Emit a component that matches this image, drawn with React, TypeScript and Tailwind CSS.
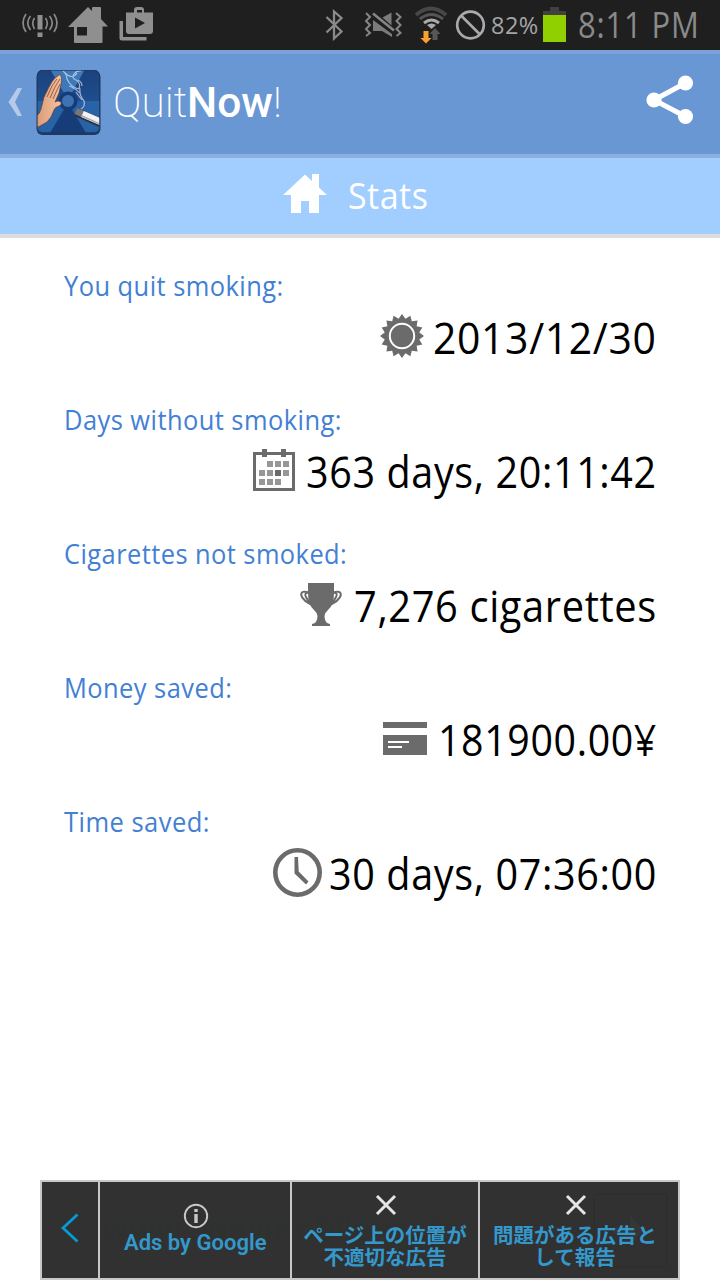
import { useLayoutEffect, useRef, useState } from "react";
import type { ReactNode } from "react";

/** Text condensed or widened horizontally so that it fills its box. */
function FitText({ children, className }: { children: ReactNode; className: string }) {
  const box = useRef<HTMLSpanElement>(null);
  const inner = useRef<HTMLSpanElement>(null);
  const [scale, setScale] = useState(1);
  useLayoutEffect(() => {
    if (box.current && inner.current && inner.current.offsetWidth) {
      setScale(box.current.clientWidth / inner.current.offsetWidth);
    }
  }, []);
  return (
    <span ref={box} className={`block shrink-0 whitespace-nowrap ${className}`}>
      <span ref={inner} className="inline-block origin-left" style={{ transform: `scaleX(${scale})` }}>
        {children}
      </span>
    </span>
  );
}

function StatusBar() {
  return (
    <div className="flex h-[50px] items-start bg-[#1f1f1f]">
      <svg className="ml-[21px] mt-[12px] shrink-0" width="38" height="26" viewBox="21 12 38 26" fill="none" stroke="#8a8a8a" strokeWidth="1.700">
        <path d="M26 14 Q20 23 26 32 M30.5 16 Q25 23 30.5 30 M34.500 18 Q31 23 34.500 29 M54 14 Q60 23 54 32 M49.500 16 Q55 23 49.500 30 M45.500 18 Q49 23 45.500 29" />
        <path d="M37.500 15h5v14.500h-5zM37.500 32.500h5v4.500h-5z" fill="#8f8f8f" stroke="none" />
      </svg>
      <svg className="ml-[9px] mt-[6px] shrink-0" width="40" height="38" viewBox="68 6 40 38">
        <path fillRule="evenodd" fill="#8f8f8f" d="M88 7l4 4V8q0-1 1-1h7q1 0 1 1v11l7 7.500h-5.500V42q0 1-1 1H75q-1 0-1-1V27h-6zM77 27v8.500h10V27z" />
      </svg>
      <svg className="ml-[11px] mt-[6px] shrink-0" width="36" height="36" viewBox="119 6 36 36">
        <path fill="#8f8f8f" fillRule="evenodd" d="M119.500 21h3.500v16H146.500v3.500H122q-2.500 0-2.500-2.500zM126 12.500h8V10q0-3 3-3h4q3 0 3 3v2.500h9V31q0 3-3 3h-21q-3 0-3-3zM137 12.500h5V10h-5zM135 17.500v11l10-5.500z" />
      </svg>
      <svg className="ml-[170px] mt-[9px] shrink-0" width="20" height="32" viewBox="325 9 20 32" fill="none" stroke="#8a8a8a" strokeWidth="2.300">
        <path d="M326.500 17l15 14.500-7.500 7V11.500l7.500 6.500-15 14.500" />
      </svg>
      <svg className="ml-[20px] mt-[11px] shrink-0" width="38" height="28" viewBox="365 11 38 28">
        <path fill="#7b7b7b" d="M373 20l19 14v3l-10-6h-9zM382.500 17.500l9-5v13z" />
        <path stroke="#858585" strokeWidth="2.600" fill="none" d="M373 13.500l21 17" />
        <path stroke="#858585" strokeWidth="2" fill="none" d="M366 13l4 4-4 4 4 4-4 4 4 4-4 3M396 13l4.500 4-4 4 4 4-4 4 4 4-4 3" />
      </svg>
      <svg className="ml-[12px] mt-[6px] shrink-0" width="34" height="38" viewBox="415 6 34 38" fill="none">
        <path d="M416 15q15-13 30 0" stroke="#484848" strokeWidth="4" />
        <path d="M420 19q11-9 23 0" stroke="#555" strokeWidth="3" />
        <path d="M424 23q7.500-6 15 0" stroke="#aaa" strokeWidth="3" />
        <path d="M427 25q4.500-3 9 0l-4.500 4z" fill="#aaa" />
        <path d="M435 28l5.500 6h-3v6h-5v-6h-3z" fill="#575757" />
        <path d="M423.500 31h5v7h3l-5.500 5.500-5.500-5.500h3z" fill="#f9a02e" />
      </svg>
      <svg className="ml-[6px] mt-[9px] shrink-0" width="32" height="32" viewBox="455 9 32 32" fill="none" stroke="#aaa" strokeWidth="2.700">
        <circle cx="470.500" cy="25" r="13.300" />
        <path d="M461 15.500l19 19" />
      </svg>
      <FitText className="ml-[4px] mt-[9px] w-[48px] text-[24px] leading-[32px] tracking-[0.500px] text-[#a5a5a5]">82%</FitText>
      <svg className="ml-[4px] mt-[7px] shrink-0" width="23" height="35" viewBox="0 0 23 35">
        <path fill="#404040" d="M7 0h9v4h7v5H0V4h7z" />
        <path fill="#91d000" d="M0 8h23v27H0z" />
      </svg>
      <FitText className="ml-[12px] w-[122px] text-[36px] leading-[49px] tracking-[1px] text-[#8a8a8a]">8:11 PM</FitText>
    </div>
  );
}

function AppLogo() {
  return (
    <svg className="ml-[13px] mt-[15px] shrink-0" width="66" height="68" viewBox="0 0 66 68">
      <defs>
        <linearGradient id="tile" x1="0" y1="0" x2="0" y2="1">
          <stop offset="0" stopColor="#1b417c" />
          <stop offset="1" stopColor="#225ba0" />
        </linearGradient>
        <linearGradient id="skin" x1="0" y1="0" x2="1" y2="0">
          <stop offset="0" stopColor="#d99a76" />
          <stop offset="1" stopColor="#f6c29f" />
        </linearGradient>
        <clipPath id="round"><rect x="1" y="1" width="62.500" height="62.500" rx="5" /></clipPath>
      </defs>
      <rect x="0.500" y="2" width="64" height="64" rx="6" fill="#1c3a66" />
      <g clipPath="url(#round)">
        <path fill="url(#tile)" d="M0 0h64v64H0z" />
        <path fill="#3f78b8" d="M14 0h35L32 31z" />
        <path fill="#2862a7" d="M0 32h32L14 64H0zM32 32h32v32H50z" />
        <path fill="#173d78" d="M32 35l18 29H14z" />
        <circle cx="32" cy="32" r="9.500" fill="#173d78" />
        <circle cx="32" cy="32" r="6" fill="#3f73b2" />
        <path fill="url(#skin)" stroke="#603c36" strokeWidth="0.700" d="M0 47q4-2 5-7l3-12 5-10q3-6 6-9l4-3q2-1 2 1 1 4 0 8l-2 9-4 9q3-2 6 0 1 3-2 4-4 1-5 4l-3 7-4 5-7 4-4 2z" />
        <path fill="none" stroke="#8d5145" strokeWidth="0.900" d="M11 28l5-11 5-7M14 29l5-11 5-8M17 30l4-9 3-6" />
        <g fill="none" stroke="#d8e4ef" strokeWidth="1.200" opacity="0.700">
          <path d="M44 41q6-4 4-9-5-6-4-12-9-1-13-10 0-5-4-8" />
          <path d="M44 24q-7-6-11-7M43 20q2-6-3-9-5-2-2-6t7-3M46 17q0-4-4-6M29 4q8 7 12 0M46 31q-4-5-6-8" />
        </g>
        <path d="M40 43l25 11" stroke="#2a3444" strokeWidth="9" />
        <path d="M40 42l25 11" stroke="#77777a" strokeWidth="6.500" />
        <path d="M46.500 45l18.500 8" stroke="#f1f2f3" strokeWidth="6.500" />
        <path d="M46 47l19 8.500" stroke="#aaa8ac" strokeWidth="1.500" />
      </g>
      <rect x="1.500" y="1.500" width="62" height="62" rx="5" fill="none" stroke="#22334b" strokeOpacity="0.600" />
    </svg>
  );
}

function Header() {
  return (
    <header className="flex h-[108px] items-start border-y-4 border-t-[#7ba2d9] border-b-[#8bb0de] bg-[#6997d3]">
      <svg className="ml-[8px] mt-[34px] shrink-0" width="15" height="28" viewBox="0 0 15 28">
        <path d="M9.500 0H14L7 14l7 14H9.500L0.500 14z" fill="#b5cae9" />
      </svg>
      <AppLogo />
      <div className="ml-[11px] mt-[19px] flex font-[Roboto] text-[43px] leading-[58px] text-white">
        <FitText className="w-[74px] font-extralight">Quit</FitText>
        <FitText className="w-[86px] font-medium">Now</FitText>
        <FitText className="w-[9px] font-extralight">!</FitText>
      </div>
      <svg className="mr-[26px] mt-[21px] ml-auto shrink-0" width="48" height="50" viewBox="0 0 48 50">
        <path d="M39.500 8L8 25l31.500 16.500" fill="none" stroke="#fff" strokeWidth="5" />
        <g fill="#fff">
          <circle cx="39.500" cy="8" r="7.600" />
          <circle cx="8" cy="25" r="7.600" />
          <circle cx="39.500" cy="41.500" r="7.600" />
        </g>
      </svg>
    </header>
  );
}

function TitleBar() {
  return (
    <div className="flex h-[80px] items-start border-b-4 border-[#dcdcdc] bg-[#a1cdff]">
      <svg className="ml-[283px] mt-[16px] shrink-0" width="44" height="39" viewBox="0 0 44 39">
        <path fill="#fff" d="M22 0.500l7 6.500V0h7v13.500l8 7.500h-8v18H26V27h-8v12H8V21H0z" />
      </svg>
      <FitText className="ml-[21px] mt-[12px] w-[80px] text-[37px] leading-[50px] tracking-[0.500px] text-white">Stats</FitText>
    </div>
  );
}

const sunPoints = Array.from({ length: 32 }, (_, i) => {
  const r = i % 2 ? 17.6 : 22;
  const a = (i * Math.PI) / 16;
  return `${22 + r * Math.sin(a)},${22 - r * Math.cos(a)}`;
}).join(" ");

const SunIcon = (
  <svg width="44" height="44" viewBox="0 0 44 44" className="-mt-[2px] shrink-0">
    <polygon points={sunPoints} fill="#6b6b6b" />
    <circle cx="22" cy="22" r="12.200" fill="none" stroke="#fff" strokeWidth="2" />
  </svg>
);

const CalendarIcon = (
  <svg width="42" height="42" viewBox="0 0 42 42" className="-mt-[2px] shrink-0">
    <path fill="#6b6b6b" fillRule="evenodd" d="M0 3h9V0h5v3h14V0h5v3h9v39H0zM3 6v33h36V6h-6v2h-5V6H14v2H9V6z" />
    <path fill="#979797" d="M14 12h6v6h-6zM22 12h6v6h-6zM30 12h6v6h-6zM6 21h6v6H6zM14 21h6v6h-6zM30 21h6v6h-6zM6 30h6v6H6zM14 30h6v6h-6zM22 30h6v6h-6z" />
    <path fill="#6b6b6b" d="M22 21h6v6h-6z" />
  </svg>
);

const TrophyIcon = (
  <svg width="42" height="43" viewBox="0 0 42 43" className="shrink-0">
    <path fill="#6b6b6b" d="M8 0h26v10q0 12-6 17-3.500 3-3.500 6 0 7 5.500 8v2H12v-2q5.500-1 5.500-8 0-3-3.500-6-6-5-6-17z" />
    <path fill="none" stroke="#6b6b6b" strokeWidth="2" d="M9 9.500Q1 7 1.200 12 2 18 16 23.500M33 9.500q8-2.500 7.800 2.500Q40 18 26 23.500M9 10q-4.500-1-3.500 3 2 5 6.500 7.500M33 10q4.500-1 3.500 3-2 5-6.500 7.500" />
  </svg>
);

const CardIcon = (
  <svg width="44" height="33" viewBox="0 0 44 33" className="shrink-0">
    <path fill="#6b6b6b" d="M0 0h44v6H0zM0 13h44v20H0z" />
    <path fill="#fff" d="M5 19h21v2H5zM5 24h14v2H5z" />
  </svg>
);

const ClockIcon = (
  <svg width="49" height="49" viewBox="0 0 49 49" className="shrink-0">
    <circle cx="24.500" cy="24.500" r="22.200" fill="none" stroke="#6b6b6b" strokeWidth="4.600" />
    <path d="M21.500 9H25l0.700 14.500 9.800 10-2.500 3L21.500 25.500z" fill="#6b6b6b" />
  </svg>
);

const stats = [
  { label: "You quit smoking:", labelW: "w-[220px]", value: "2013/12/30", valueW: "w-[224px]", icon: SunIcon, gap: "gap-[9px]" },
  { label: "Days without smoking:", labelW: "w-[278px]", value: "363 days, 20:11:42", valueW: "w-[351px]", icon: CalendarIcon, gap: "gap-[11px]" },
  { label: "Cigarettes not smoked:", labelW: "w-[283px]", value: "7,276 cigarettes", valueW: "w-[303px]", icon: TrophyIcon, gap: "gap-[12px]" },
  { label: "Money saved:", labelW: "w-[168px]", value: "181900.00¥", valueW: "w-[219px]", icon: CardIcon, gap: "gap-[11px]" },
  { label: "Time saved:", labelW: "w-[146px]", value: "30 days, 07:36:00", valueW: "w-[328px]", icon: ClockIcon, gap: "gap-[7px]" },
];

function StatsList() {
  return (
    <main className="flex flex-1 flex-col gap-[34px] pt-[27px] pr-[63px] pl-[64px]">
      {stats.map((s) => (
        <section key={s.label} className="flex flex-col">
          <FitText className={`text-[28px] leading-[40px] tracking-[0.500px] text-[#4280d4] ${s.labelW}`}>{s.label}</FitText>
          <div className={`flex h-[60px] items-center justify-end ${s.gap}`}>
            <div className="pt-[3px]">{s.icon}</div>
            <FitText className={`pt-[3px] text-[44px] leading-[60px] tracking-[0.700px] text-black ${s.valueW}`}>{s.value}</FitText>
          </div>
        </section>
      ))}
    </main>
  );
}

function CrossIcon() {
  return (
    <svg width="22" height="22" viewBox="0 0 22 22" className="ml-[2px]">
      <path d="M2 2l18 18M20 2L2 20" stroke="#e6e6e6" strokeWidth="3" />
    </svg>
  );
}

function AdBar() {
  return (
    <footer className="relative mx-[40px] flex h-[100px] border-2 border-[#c8c8c8] bg-[#313131] text-[#3498cc]">
      <FitText className="absolute top-[27px] left-[60px] w-[355px] font-[Roboto] text-[34px] leading-[40px] text-[#2d322f]">
        www.sonymobile.co.jp
      </FitText>
      <svg className="absolute top-[11px] left-[551px]" width="76" height="76" viewBox="0 0 76 76">
        <rect x="1" y="1" width="73" height="73" rx="3" fill="none" stroke="#2d2d2d" />
        <path d="M20 34h17V22l14 15-14 15V41H20z" fill="#363636" />
      </svg>
      <div className="relative flex w-[58px] items-center justify-center border-r-2 border-[#c8c8c8]">
        <svg width="18" height="30" viewBox="0 0 18 30" className="-mt-[4px]">
          <path d="M16.500 1.500L2 15l14.500 13.500" fill="none" stroke="#079bd6" strokeWidth="2.800" />
        </svg>
      </div>
      <div className="relative flex w-[192px] flex-col items-center border-r-2 border-[#c8c8c8] pt-[21px]">
        <svg width="26" height="26" viewBox="0 0 26 26" className="ml-[2px]">
          <circle cx="13" cy="13" r="11.200" fill="none" stroke="#c9c9c9" strokeWidth="1.900" />
          <path d="M11.300 6h3.400v3h-3.400zM11.300 11h3.400v9h-3.400z" fill="#c9c9c9" />
        </svg>
        <FitText className="w-[142px] font-[Roboto] text-[22px] leading-[27px] font-semibold">Ads by Google</FitText>
      </div>
      <div className="relative flex w-[188px] flex-col items-center border-r-2 border-[#c8c8c8] pt-[12px] font-['Noto_Sans_CJK_JP',sans-serif] text-[20.500px] leading-[22px] font-bold">
        <CrossIcon />
        <div className="mt-[7px] text-center whitespace-nowrap">
          ページ上の位置が
          <br />
          不適切な広告
        </div>
      </div>
      <div className="relative flex flex-1 flex-col items-center pt-[12px] pr-[8px] font-['Noto_Sans_CJK_JP',sans-serif] text-[20.500px] leading-[22px] font-bold">
        <CrossIcon />
        <div className="mt-[7px] text-center whitespace-nowrap">
          問題がある広告と
          <br />
          して報告
        </div>
      </div>
    </footer>
  );
}

export default function App() {
  return (
    <div className="flex h-[1280px] w-[720px] flex-col overflow-hidden bg-white font-['Open_Sans',sans-serif]">
      <StatusBar />
      <Header />
      <TitleBar />
      <StatsList />
      <AdBar />
    </div>
  );
}
